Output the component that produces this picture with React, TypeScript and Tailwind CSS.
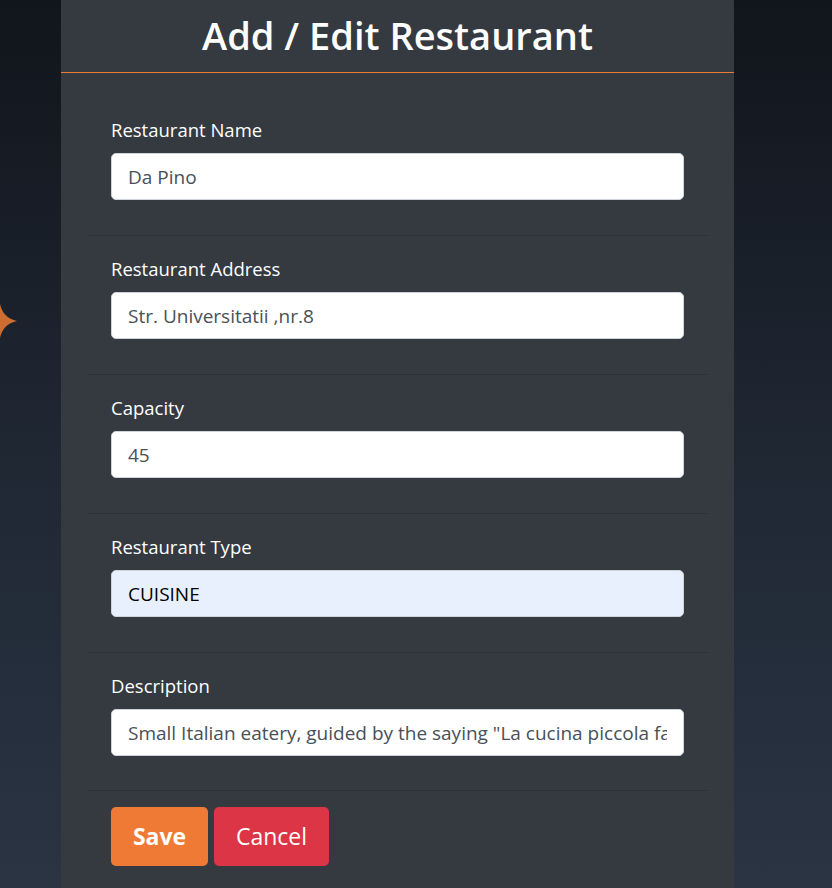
import React from 'react';

const fields = [
  { label: 'Restaurant Name', value: 'Da Pino' },
  { label: 'Restaurant Address', value: 'Str. Universitatii ,nr.8' },
  { label: 'Capacity', value: '45' },
  { label: 'Restaurant Type', value: 'CUISINE', autofill: true },
  { label: 'Description', value: 'Small Italian eatery, guided by the saying "La cucina piccola fa la casa grande"', last: true },
];

const Star = () => (
  <svg width="40" height="40" viewBox="-20 -20 40 40" className="absolute left-[-20px] top-[301px]">
    <path d="M0 -17 Q3 -3 17 0 Q3 3 0 17 Q-3 3 -17 0 Q-3 -3 0 -17Z" fill="#cd6d2f" />
  </svg>
);

export default function App() {
  return (
    <div
      className="relative min-h-[888px] w-full overflow-hidden bg-gradient-to-b from-[#11151c] via-[#1f2733] to-[#2a3443] font-['Open_Sans',sans-serif]"
    >
      <Star />
      <div className="ml-[61px] w-[673px] min-h-[888px] bg-[#343a40]">
        {/* Header */}
        <div className="h-[73px] border-b border-[#f07a30] flex items-center justify-center">
          <h1 className="text-[38px] font-semibold text-white leading-none -mt-[2px]">Add / Edit Restaurant</h1>
        </div>

        <div className="pt-6 px-[26px]">
          {fields.map((f) => (
            <div
              key={f.label}
              className={`border-b border-[#2c3137] px-6 pt-[19px] ${f.last ? 'pb-[34px]' : 'pb-[35px]'}`}
            >
              <label className="block text-[18.5px] leading-[27px] text-white mb-[10px]">{f.label}</label>
              <input
                readOnly
                value={f.value}
                className={`block w-full h-[47px] rounded-[5px] border border-[#ced4da] px-4 text-[19px] outline-none ${
                  f.autofill ? 'bg-[#e8f0fe] text-black' : 'bg-white text-[#495057]'
                }`}
              />
            </div>
          ))}

          <div className="flex gap-[6px] px-6 pt-[16px]">
            <button className="h-[59px] w-[97px] rounded-[5px] bg-[#ef7a35] text-white text-[23px] font-bold">Save</button>
            <button className="h-[59px] w-[115px] rounded-[5px] bg-[#dc3545] text-white text-[23px]">Cancel</button>
          </div>
        </div>
      </div>
    </div>
  );
}
